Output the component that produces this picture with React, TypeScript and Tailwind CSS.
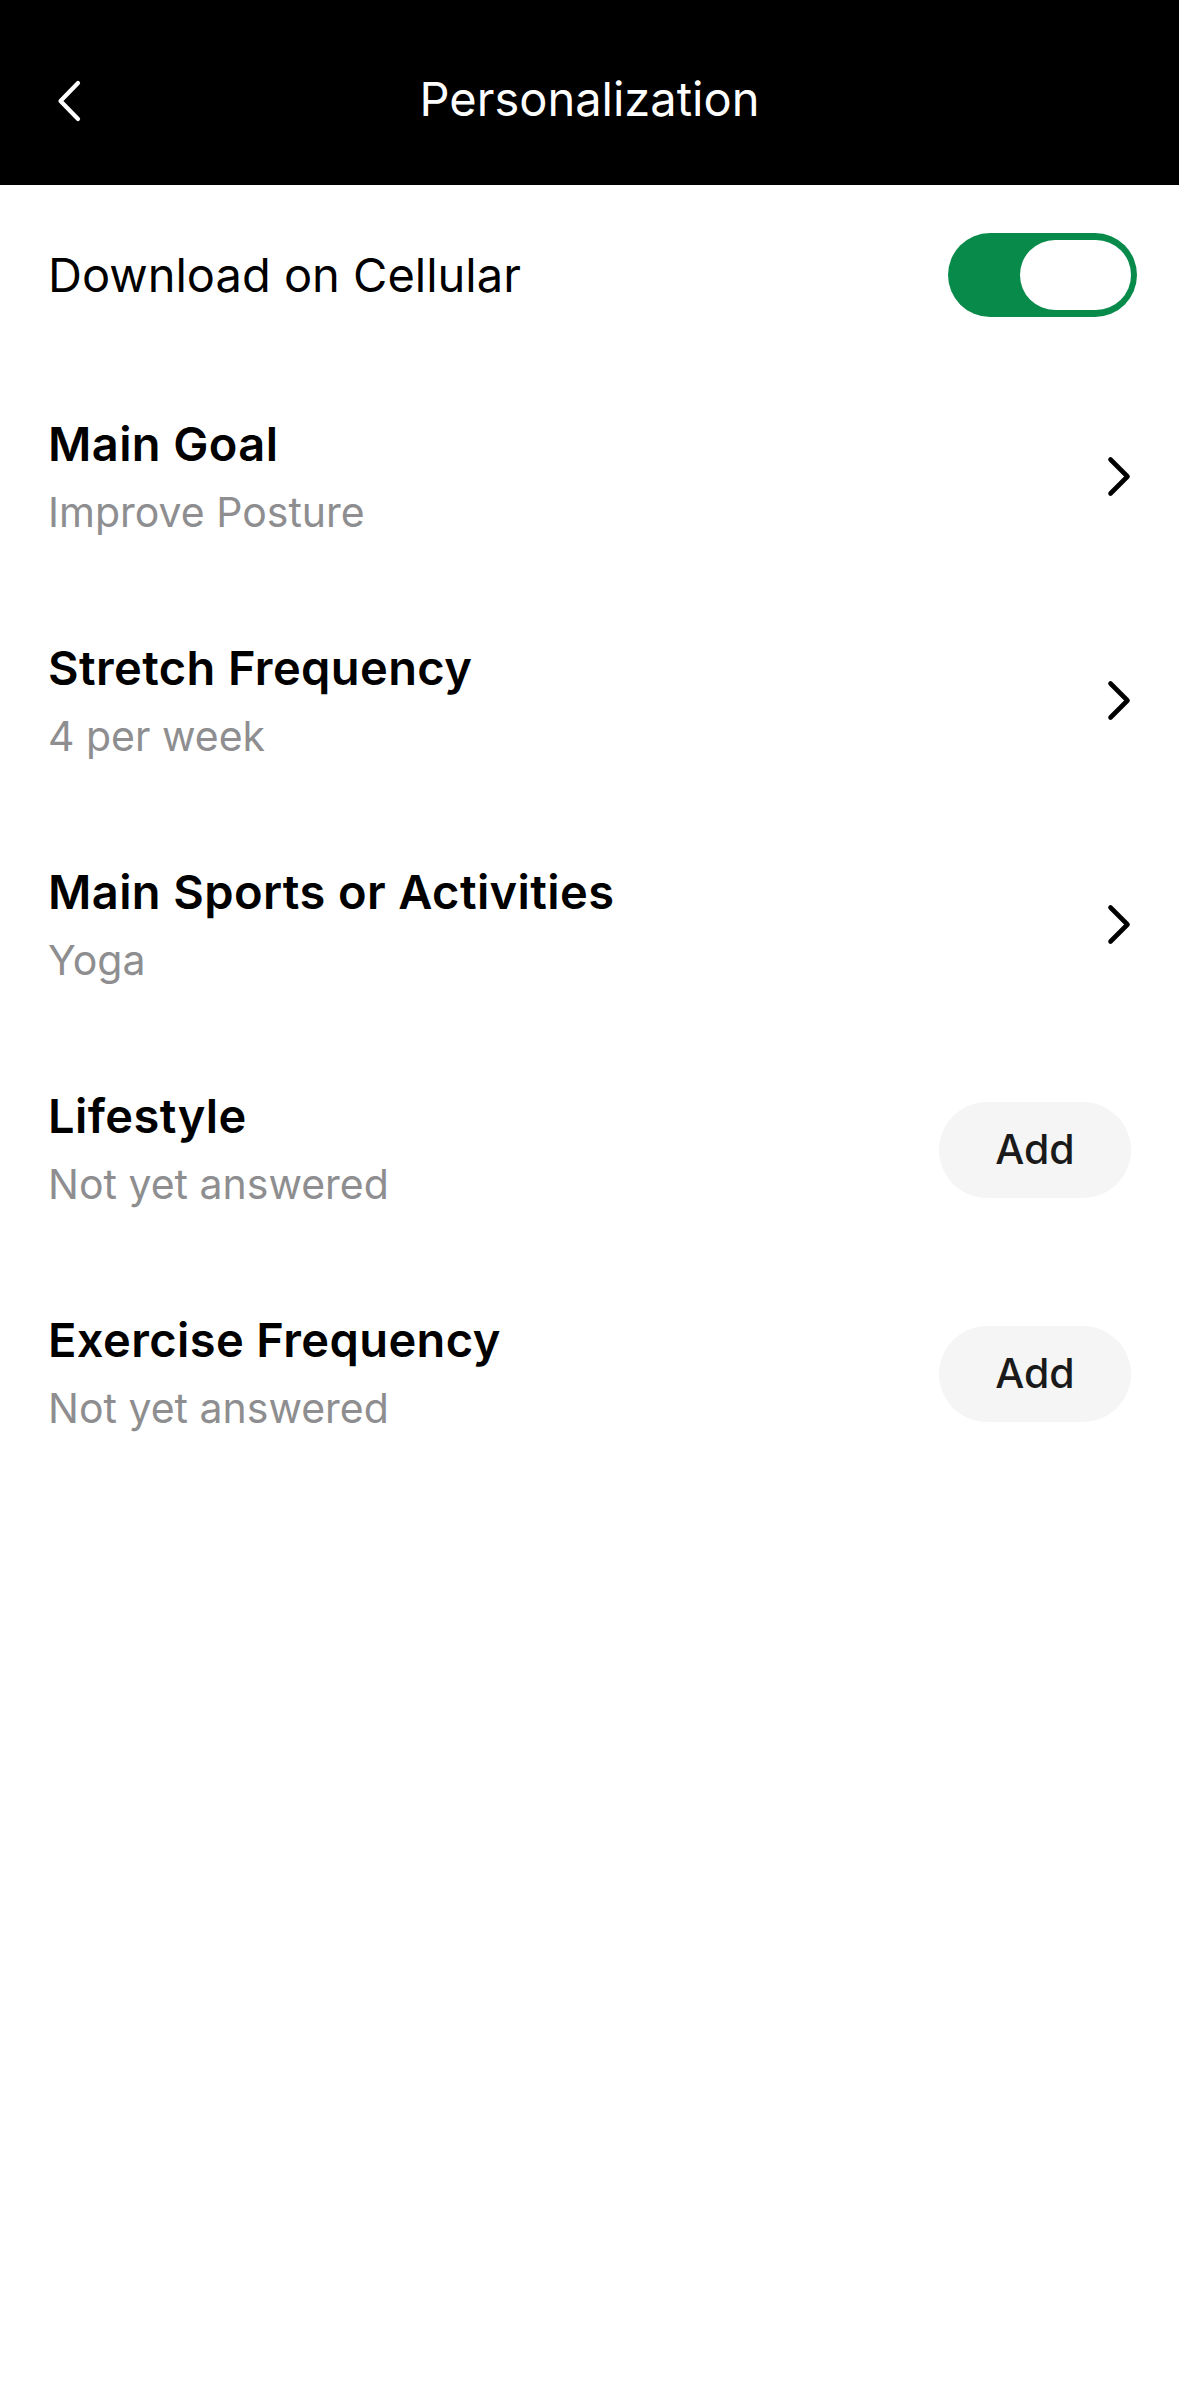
import React, { useState } from 'react';

interface SettingRow {
  id: string;
  title: string;
  value: string;
  action: 'link' | 'add';
}

const rows: SettingRow[] = [
  { id: 'goal', title: 'Main Goal', value: 'Improve Posture', action: 'link' },
  { id: 'stretch', title: 'Stretch Frequency', value: '4 per week', action: 'link' },
  { id: 'sports', title: 'Main Sports or Activities', value: 'Yoga', action: 'link' },
  { id: 'lifestyle', title: 'Lifestyle', value: 'Not yet answered', action: 'add' },
  { id: 'exercise', title: 'Exercise Frequency', value: 'Not yet answered', action: 'add' },
];

const ChevronRight = () => (
  <svg width="24" height="41" viewBox="0 0 24 41" fill="none">
    <path d="M3.5 3.5 L20.5 20.5 L3.5 37.5" stroke="#000" strokeWidth="4.6" strokeLinecap="round" strokeLinejoin="round" />
  </svg>
);

const ChevronLeft = () => (
  <svg width="24" height="42" viewBox="0 0 24 42" fill="none">
    <path d="M21 3 L3.5 21 L21 39" stroke="#fff" strokeWidth="4.2" strokeLinecap="round" strokeLinejoin="round" />
  </svg>
);

const App: React.FC = () => {
  const [cellular, setCellular] = useState(true);

  return (
    <div className="min-h-screen w-full bg-white font-['Inter','Liberation_Sans',sans-serif]">
      {/* header */}
      <div className="relative flex h-[185px] items-center justify-center bg-black pt-[13px]">
        <button className="absolute left-[57px] top-[80px]">
          <ChevronLeft />
        </button>
        <h1 className="text-[47px] leading-[56px] font-normal text-white">Personalization</h1>
      </div>

      {/* cellular toggle */}
      <div className="flex h-[179px] items-center justify-between pl-[48px] pr-[42px]">
        <span className="text-[47px] leading-[58px] font-normal text-black">Download on Cellular</span>
        <button
          onClick={() => setCellular(!cellular)}
          className={`flex h-[84px] w-[189px] items-center rounded-full px-[6px] ${
            cellular ? 'justify-end bg-[#078a4a]' : 'justify-start bg-[#d9d9d9]'
          }`}
        >
          <span className="h-[70px] w-[111px] rounded-full bg-white" />
        </button>
      </div>

      {/* setting rows */}
      {rows.map((row) => (
        <div key={row.id} className="flex h-[224px] items-center justify-between pl-[48px] pr-[48px]">
          <div className="flex flex-col gap-[15px]">
            <span className="text-[47px] leading-[56px] font-semibold tracking-[0.4px] text-black">{row.title}</span>
            <span className="text-[41px] leading-[50px] font-normal text-[#8e8e90]">{row.value}</span>
          </div>
          {row.action === 'link' ? (
            <ChevronRight />
          ) : (
            <button className="mt-[3px] flex h-[96px] w-[192px] items-center justify-center rounded-full bg-[#f5f5f5] text-[41px] font-medium text-[#1a1a1a]">
              Add
            </button>
          )}
        </div>
      ))}
    </div>
  );
};

export default App;
